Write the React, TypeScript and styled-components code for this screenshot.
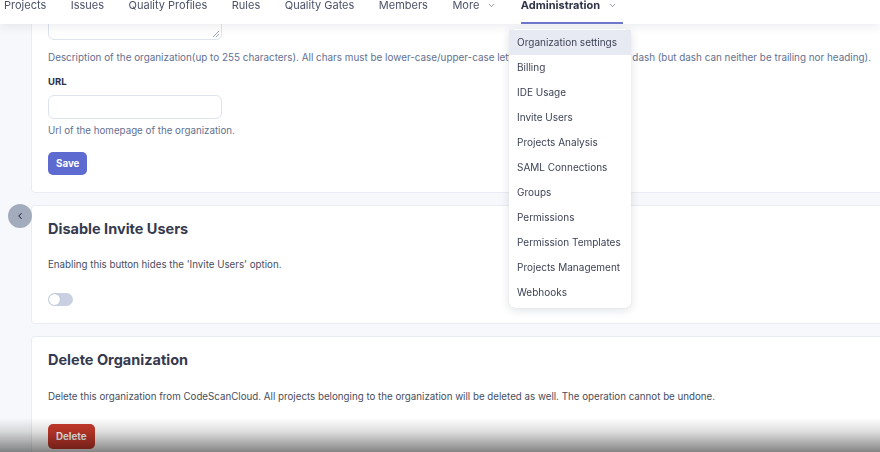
import styled, { createGlobalStyle } from 'styled-components';
import { ChevronDown, ChevronLeft } from 'lucide-react';

const GlobalStyle = createGlobalStyle`
  html, body {
    margin: 0;
    padding: 0;
    background: #f7f8fb;
    font-family: Inter, "Noto Sans", sans-serif;
    overflow: hidden;
  }
  * { box-sizing: border-box; }
`;

const Page = styled.div`
  position: relative;
  width: 880px;
  height: 452px;
  overflow: hidden;
  background: #f7f8fb;
`;

const TopNav = styled.nav`
  position: sticky;
  top: 0;
  z-index: 5;
  height: 24px;
  background: #fff;
  box-shadow: 0 3px 10px rgba(30, 40, 70, 0.08);
  overflow: hidden;
`;

const NavRow = styled.ul`
  display: flex;
  gap: 24.5px;
  margin: -2px 0 0;
  padding: 0 0 0 4px;
  list-style: none;
`;

const NavItem = styled.li<{ $active?: boolean }>`
  display: flex;
  align-items: flex-start;
  gap: 8px;
  height: 26px;
  padding-right: ${p => (p.$active ? '6px' : '0')};
  border-bottom: 2px solid ${p => (p.$active ? '#6f79cc' : 'transparent')};
  font-size: 11px;
  line-height: 14px;
  font-weight: ${p => (p.$active ? 700 : 400)};
  color: ${p => (p.$active ? '#2f3447' : '#4c5268')};
  white-space: nowrap;

  svg {
    margin-top: 3px;
    color: #6b7186;
  }
`;

const Main = styled.main`
  display: flex;
  flex-direction: column;
  gap: 12px;
  margin-top: -61px;
  padding-left: 31px;
`;

const Card = styled.section<{ $pt: number }>`
  margin-right: -10px;
  padding: ${p => p.$pt}px 16px 17px;
  background: #fff;
  border: 1px solid #eaecf4;
  border-radius: 4px;
`;

const TextArea = styled.div`
  position: relative;
  width: 174px;
  height: 60px;
  border: 1px solid #dfe3ee;
  border-radius: 6px;

  &::after {
    content: '';
    position: absolute;
    right: 2px;
    bottom: 2px;
    width: 6px;
    height: 6px;
    background: linear-gradient(135deg, transparent 45%, #9aa0ad 45%, #9aa0ad 55%, transparent 55%, transparent 70%, #9aa0ad 70%, #9aa0ad 80%, transparent 80%);
  }
`;

const Help = styled.p<{ $mt: number; $size?: number }>`
  margin: ${p => p.$mt}px 0 0;
  font-size: ${p => p.$size ?? 9.75}px;
  line-height: 16px;
  color: #637091;
  white-space: nowrap;
`;

const Label = styled.div`
  margin-top: 9px;
  font-size: 9.5px;
  line-height: 16px;
  font-weight: 700;
  color: #2c3146;
`;

const Input = styled.div`
  margin-top: 5px;
  width: 174px;
  height: 24px;
  border: 1px solid #dfe3ee;
  border-radius: 6px;
  background: #fff;
`;

const Button = styled.button<{ $mt: number; $bg: string; $h: number }>`
  display: block;
  margin-top: ${p => p.$mt}px;
  height: ${p => p.$h}px;
  padding: 0 8px;
  border: none;
  border-radius: 5px;
  background: ${p => p.$bg};
  color: #fff;
  font-family: Inter, sans-serif;
  font-size: 9.75px;
  font-weight: 700;
`;

const Title = styled.h2`
  margin: 0;
  font-size: 14.5px;
  line-height: 20px;
  font-weight: 700;
  color: #353a4e;
`;

const Body = styled.p<{ $mt: number }>`
  margin: ${p => p.$mt}px 0 0;
  font-size: 9.75px;
  line-height: 16px;
  color: #474d60;
  white-space: nowrap;
`;

const Toggle = styled.div`
  position: relative;
  margin-top: 20px;
  width: 25px;
  height: 13px;
  border-radius: 7px;
  background: #c8d0e2;

  &::after {
    content: '';
    position: absolute;
    left: 1px;
    top: 1px;
    width: 11px;
    height: 11px;
    border-radius: 50%;
    background: #fff;
    box-shadow: 0 0 1px rgba(0, 0, 0, 0.25);
  }
`;

const CollapseButton = styled.button`
  position: absolute;
  left: 8px;
  top: 204px;
  z-index: 3;
  display: flex;
  align-items: center;
  justify-content: center;
  width: 24px;
  height: 24px;
  padding: 0;
  border: none;
  border-radius: 50%;
  background: #a2acbc;
  color: #2a2f3d;
`;

const Dropdown = styled.ul`
  position: absolute;
  left: 509px;
  top: 29px;
  z-index: 6;
  width: 122px;
  margin: 0;
  padding: 1px 0 3px;
  list-style: none;
  background: #fff;
  border-radius: 6px;
  box-shadow: 0 2px 10px rgba(30, 40, 70, 0.14), 0 0 1px rgba(30, 40, 70, 0.15);
`;

const DropItem = styled.li<{ $active?: boolean }>`
  height: 25px;
  padding-left: 8px;
  font-size: 10px;
  line-height: 25px;
  color: #3d4356;
  white-space: nowrap;
  background: ${p => (p.$active ? '#e7e9f3' : 'transparent')};
`;

const BottomShade = styled.div`
  position: absolute;
  left: 0;
  right: 0;
  bottom: 0;
  z-index: 7;
  height: 34px;
  pointer-events: none;
  background: linear-gradient(to bottom, rgba(0, 0, 0, 0), rgba(0, 0, 0, 0.13) 40%, rgba(0, 0, 0, 0.48));
`;

const navItems = ['Projects', 'Issues', 'Quality Profiles', 'Rules', 'Quality Gates', 'Members'];

const adminMenu = [
  'Organization settings',
  'Billing',
  'IDE Usage',
  'Invite Users',
  'Projects Analysis',
  'SAML Connections',
  'Groups',
  'Permissions',
  'Permission Templates',
  'Projects Management',
  'Webhooks',
];

export default function App() {
  return (
    <Page>
      <GlobalStyle />
      <TopNav>
        <NavRow>
          {navItems.map(n => <NavItem key={n}>{n}</NavItem>)}
          <NavItem>More <ChevronDown size={9} strokeWidth={2} /></NavItem>
          <NavItem $active>Administration <ChevronDown size={9} strokeWidth={2} /></NavItem>
        </NavRow>
      </TopNav>

      <Main>
        <Card $pt={16}>
          <TextArea />
          <Help $mt={9} $size={9.9}>
            Description of the organization(up to 255 characters). All chars must be lower-case/upper-case letters (from a to z), digits or dash (but dash can neither be trailing nor heading).
          </Help>
          <Label>URL</Label>
          <Input />
          <Help $mt={4}>Url of the homepage of the organization.</Help>
          <Button $mt={13} $h={23} $bg="#5d6ad0">Save</Button>
        </Card>

        <Card $pt={13}>
          <Title>Disable Invite Users</Title>
          <Body $mt={18}>Enabling this button hides the 'Invite Users' option.</Body>
          <Toggle />
        </Card>

        <Card $pt={13}>
          <Title>Delete Organization</Title>
          <Body $mt={19}>
            Delete this organization from CodeScanCloud. All projects belonging to the organization will be deleted as well. The operation cannot be undone.
          </Body>
          <Button $mt={19} $h={25} $bg="#c93a2c">Delete</Button>
        </Card>
      </Main>

      <CollapseButton aria-label="Collapse">
        <ChevronLeft size={10} strokeWidth={2.5} />
      </CollapseButton>

      <Dropdown>
        {adminMenu.map((m, i) => <DropItem key={m} $active={i === 0}>{m}</DropItem>)}
      </Dropdown>

      <BottomShade />
    </Page>
  );
}
